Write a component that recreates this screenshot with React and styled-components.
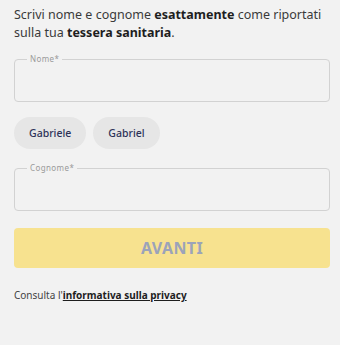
import React from "react";
import styled, { createGlobalStyle } from "styled-components";

const GlobalStyle = createGlobalStyle`
  body {
    margin: 0;
    background: #f2f2f2;
    font-family: "Noto Sans", "DejaVu Sans", sans-serif;
  }
`;

const suggestions = ["Gabriele", "Gabriel"];

const App = () => {
  return (
    <Wrapper>
      <GlobalStyle />
      <Intro>
        Scrivi nome e cognome <b>esattamente</b> come riportati sulla tua{" "}
        <b>tessera sanitaria</b>.
      </Intro>
      <Field>
        <Legend>Nome*</Legend>
        <Input type="text" />
      </Field>
      <Chips>
        {suggestions.map((s) => (
          <Chip key={s}>{s}</Chip>
        ))}
      </Chips>
      <Field $gap={15}>
        <Legend>Cognome*</Legend>
        <Input type="text" />
      </Field>
      <Button disabled>AVANTI</Button>
      <Privacy>
        Consulta l'<a href="#">informativa sulla privacy</a>
      </Privacy>
    </Wrapper>
  );
};

export default App;

const Wrapper = styled.div`
  width: 340px;
  height: 345px;
  box-sizing: border-box;
  padding: 6px 10px 0 14px;
  display: flex;
  flex-direction: column;
`;

const Intro = styled.p`
  margin: 0;
  font-size: 12.5px;
  line-height: 18px;
  color: #3a3a3a;
  b {
    font-weight: 700;
    color: #1e1e1e;
  }
`;

const Field = styled.fieldset`
  margin: ${(p) => p.$gap || 13}px 0 0;
  padding: 0 10px;
  height: 47px;
  box-sizing: border-box;
  border: 1px solid #d2d2d2;
  border-radius: 4px;
`;

const Legend = styled.legend`
  padding: 0 3px;
  margin-left: 2px;
  font-size: 8px;
  line-height: 8px;
  color: #9a9a9a;
  letter-spacing: 0.4px;
`;

const Input = styled.input`
  width: 100%;
  border: 0;
  background: transparent;
  outline: none;
  height: 28px;
  font-family: inherit;
`;

const Chips = styled.div`
  display: flex;
  gap: 7px;
  margin-top: 15px;
`;

const Chip = styled.button`
  height: 32px;
  padding: 0 15px;
  border: 0;
  border-radius: 16px;
  background: #e6e6e6;
  color: #2d3258;
  font-family: inherit;
  font-size: 10.5px;
  font-weight: 500;
`;

const Button = styled.button`
  margin-top: 17px;
  height: 40px;
  border: 0;
  border-radius: 4px;
  background: #f7e28f;
  color: #9ba3ba;
  font-family: inherit;
  font-size: 16px;
  font-weight: 700;
  letter-spacing: 0.4px;
`;

const Privacy = styled.p`
  margin: 20px 0 0;
  font-size: 10px;
  color: #444;
  a {
    color: #1e1e1e;
    font-weight: 700;
    text-decoration: underline;
  }
`;
